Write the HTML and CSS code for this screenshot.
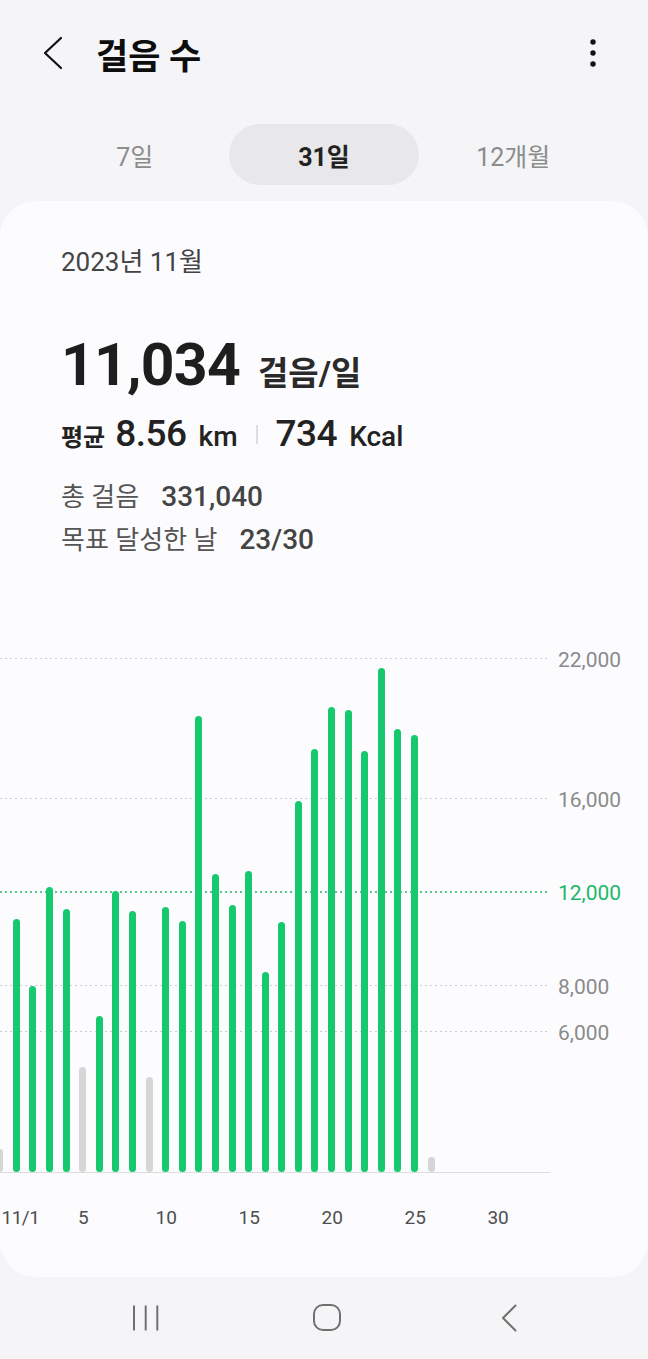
FILE: index.html
```html
<!DOCTYPE html>
<html lang="ko">

<head>
    <meta charset="UTF-8">
    <meta name="viewport" content="width=device-width, initial-scale=1.0">
    <title>걸음 수</title>
    <link rel="stylesheet" href="styles.css">
</head>

<body>
    <header class="app-bar">
        <span class="back-btn">
            <svg width="24" height="40" viewBox="0 0 24 40">
                <path d="M20 5 L4 20 L20 35" fill="none" stroke="#111" stroke-width="2.2" stroke-linecap="round" stroke-linejoin="round" />
            </svg>
        </span>
        <h1>걸음 수</h1>
        <span class="more-btn">
            <svg width="10" height="30" viewBox="0 0 10 30">
                <circle cx="5" cy="4" r="2.7" fill="#111" />
                <circle cx="5" cy="15" r="2.7" fill="#111" />
                <circle cx="5" cy="26" r="2.7" fill="#111" />
            </svg>
        </span>
    </header>

    <nav class="tabs">
        <span class="tab">7일</span>
        <span class="tab active">31일</span>
        <span class="tab">12개월</span>
    </nav>

    <main class="card">
        <div class="period">2023년 11월</div>

        <div class="daily">
            <span class="daily-value">11,034</span>
            <span class="daily-unit">걸음/일</span>
        </div>

        <div class="averages">
            <span class="avg-label">평균</span>
            <span class="avg-value">8.56</span>
            <span class="avg-unit">km</span>
            <span class="divider"></span>
            <span class="avg-value">734</span>
            <span class="avg-unit">Kcal</span>
        </div>

        <div class="totals">
            <div class="total-row"><span class="total-label">총 걸음</span><span class="total-value">331,040</span></div>
            <div class="total-row"><span class="total-label">목표 달성한 날</span><span class="total-value">23/30</span></div>
        </div>

        <div class="chart">
            <div class="plot">
                <div class="grid-line" style="bottom: 513px"></div>
                <div class="grid-line" style="bottom: 373px"></div>
                <div class="grid-line goal" style="bottom: 280px"></div>
                <div class="grid-line" style="bottom: 186.5px"></div>
                <div class="grid-line" style="bottom: 140px"></div>

                <div class="bars">
                    <div class="day"><span class="bar off" style="height: 23.5px"></span></div>
                    <div class="day"><span class="bar" style="height: 253.5px"></span></div>
                    <div class="day"><span class="bar" style="height: 186.5px"></span></div>
                    <div class="day"><span class="bar" style="height: 285px"></span></div>
                    <div class="day"><span class="bar" style="height: 263px"></span></div>
                    <div class="day"><span class="bar off" style="height: 105px"></span></div>
                    <div class="day"><span class="bar" style="height: 156.5px"></span></div>
                    <div class="day"><span class="bar" style="height: 281.5px"></span></div>
                    <div class="day"><span class="bar" style="height: 261px"></span></div>
                    <div class="day"><span class="bar off" style="height: 95.5px"></span></div>
                    <div class="day"><span class="bar" style="height: 265.5px"></span></div>
                    <div class="day"><span class="bar" style="height: 251.5px"></span></div>
                    <div class="day"><span class="bar" style="height: 456.5px"></span></div>
                    <div class="day"><span class="bar" style="height: 298.5px"></span></div>
                    <div class="day"><span class="bar" style="height: 267.5px"></span></div>
                    <div class="day"><span class="bar" style="height: 301.5px"></span></div>
                    <div class="day"><span class="bar" style="height: 200.5px"></span></div>
                    <div class="day"><span class="bar" style="height: 250px"></span></div>
                    <div class="day"><span class="bar" style="height: 371.5px"></span></div>
                    <div class="day"><span class="bar" style="height: 423.5px"></span></div>
                    <div class="day"><span class="bar" style="height: 465px"></span></div>
                    <div class="day"><span class="bar" style="height: 462.5px"></span></div>
                    <div class="day"><span class="bar" style="height: 421px"></span></div>
                    <div class="day"><span class="bar" style="height: 504px"></span></div>
                    <div class="day"><span class="bar" style="height: 443px"></span></div>
                    <div class="day"><span class="bar" style="height: 437.5px"></span></div>
                    <div class="day"><span class="bar off" style="height: 15.5px"></span></div>
                    <div class="day"></div>
                    <div class="day"></div>
                    <div class="day"></div>
                    <div class="day"></div>
                    <div class="day"></div>
                </div>
            </div>

            <div class="y-axis">
                <span class="y-label" style="bottom: 513px">22,000</span>
                <span class="y-label" style="bottom: 373px">16,000</span>
                <span class="y-label goal" style="bottom: 280px">12,000</span>
                <span class="y-label" style="bottom: 186.5px">8,000</span>
                <span class="y-label" style="bottom: 140px">6,000</span>
            </div>
        </div>

        <div class="x-axis">
            <div class="day"></div>
            <div class="day"><span class="edge">11/1</span></div>
            <div class="day"></div>
            <div class="day"></div>
            <div class="day"></div>
            <div class="day"><span>5</span></div>
            <div class="day"></div>
            <div class="day"></div>
            <div class="day"></div>
            <div class="day"></div>
            <div class="day"><span>10</span></div>
            <div class="day"></div>
            <div class="day"></div>
            <div class="day"></div>
            <div class="day"></div>
            <div class="day"><span>15</span></div>
            <div class="day"></div>
            <div class="day"></div>
            <div class="day"></div>
            <div class="day"></div>
            <div class="day"><span>20</span></div>
            <div class="day"></div>
            <div class="day"></div>
            <div class="day"></div>
            <div class="day"></div>
            <div class="day"><span>25</span></div>
            <div class="day"></div>
            <div class="day"></div>
            <div class="day"></div>
            <div class="day"></div>
            <div class="day"><span>30</span></div>
            <div class="day"></div>
        </div>
    </main>

    <footer class="nav-bar">
        <svg width="28" height="28" viewBox="0 0 28 28">
            <path d="M2 1.5 V26.5 M13.7 1.5 V26.5 M25.3 1.5 V26.5" stroke="#707070" stroke-width="2" />
        </svg>
        <svg width="30" height="30" viewBox="0 0 30 30">
            <rect x="2" y="2" width="26" height="25" rx="9" fill="none" stroke="#707070" stroke-width="2" />
        </svg>
        <svg width="20" height="30" viewBox="0 0 20 30">
            <path d="M16.5 2.5 L4 15 L16.5 27.5" fill="none" stroke="#707070" stroke-width="2" stroke-linecap="round" stroke-linejoin="round" />
        </svg>
    </footer>
</body>

</html>
```

FILE: styles.css
```css
* {
    margin: 0;
    padding: 0;
    box-sizing: border-box;
}

body {
    width: 648px;
    min-height: 1359px;
    background-color: #f5f5f7;
    font-family: Roboto, "Noto Sans CJK KR", sans-serif;
    color: #222;
    overflow-x: hidden;
}

/* top bar */
.app-bar {
    height: 106px;
    display: flex;
    align-items: center;
    padding: 0 50px 0 41px;
}

.back-btn,
.more-btn {
    display: flex;
}

.app-bar h1 {
    margin-left: 31px;
    font-size: 35px;
    font-weight: 700;
    color: #0d0d0d;
}

.more-btn {
    margin-left: auto;
}

/* period tabs */
.tabs {
    display: grid;
    grid-template-columns: repeat(3, 1fr);
    padding: 0 40px;
    margin-top: 18px;
}

.tab {
    height: 61px;
    display: flex;
    align-items: center;
    justify-content: center;
    font-size: 25px;
    color: #8c8c8c;
    border-radius: 31px;
}

.tab.active {
    background-color: #e8e8ea;
    color: #222;
    font-weight: 700;
}

/* main card */
.card {
    margin-top: 16px;
    height: 1076px;
    background-color: #fcfcfe;
    border-radius: 36px;
    padding-top: 45px;
    overflow: hidden;
}

.period,
.daily,
.averages,
.totals {
    padding-left: 61px;
}

.period {
    font-size: 26px;
    line-height: 32px;
    color: #444;
}

.daily {
    margin-top: 52px;
    display: flex;
    align-items: baseline;
    height: 70px;
}

.daily-value {
    font-size: 59px;
    font-weight: 700;
    line-height: 70px;
    color: #1e1e1e;
    letter-spacing: -0.8px;
}

.daily-unit {
    margin-left: 18px;
    font-size: 33px;
    font-weight: 700;
    color: #2a2a2a;
}

.averages {
    margin-top: 14px;
    height: 40px;
    display: flex;
    align-items: baseline;
    color: #222;
}

.avg-label {
    font-size: 24px;
    font-weight: 700;
    margin-right: 10px;
}

.avg-value {
    font-size: 37px;
    font-weight: 500;
    line-height: 40px;
    letter-spacing: -0.5px;
}

.avg-unit {
    font-size: 28px;
    font-weight: 500;
    margin-left: 12px;
}

.divider {
    align-self: center;
    width: 2px;
    height: 19px;
    margin: 0 18px;
    background-color: #dedede;
}

.totals {
    margin-top: 21px;
}

.total-row {
    display: flex;
    align-items: baseline;
    height: 43px;
    line-height: 43px;
}

.total-label {
    font-size: 26px;
    color: #555;
}

.total-value {
    margin-left: 22px;
    font-size: 28px;
    font-weight: 500;
    color: #444;
}

/* chart */
.chart {
    margin-top: 40px;
    display: flex;
    gap: 8px;
}

.plot {
    position: relative;
    width: 550px;
    height: 572px;
    border-bottom: 1px solid #dcdcdc;
}

.grid-line {
    position: absolute;
    left: 0;
    right: 2px;
    height: 1px;
    background-image: linear-gradient(to right, #cdcdcd 40%, transparent 40%);
    background-size: 5px 1px;
    background-repeat: repeat-x;
}

.grid-line.goal {
    height: 2px;
    margin-bottom: -0.5px;
    background-image: linear-gradient(to right, #5cc490 40%, transparent 40%);
    background-size: 5px 2px;
}

.bars {
    position: relative;
    height: 100%;
    display: flex;
    align-items: flex-end;
    margin-left: -8.6px;
}

.day {
    flex: 0 0 16.6px;
    min-width: 0;
    display: flex;
    justify-content: center;
}

.bar {
    width: 7px;
    border-radius: 3.5px;
    background-color: #16c96e;
}

.bar.off {
    background-color: #d6d6d6;
}

.y-axis {
    position: relative;
    width: 90px;
    height: 572px;
}

.y-label {
    position: absolute;
    left: 0;
    transform: translateY(50%);
    font-size: 21px;
    line-height: 24px;
    color: #8a8a8a;
}

.y-label.goal {
    color: #1eb76a;
}

.x-axis {
    display: flex;
    margin-left: -8px;
    margin-top: 33px;
    font-size: 19px;
    line-height: 24px;
    color: #4e4e4e;
}

.x-axis span {
    white-space: nowrap;
}

/* first label is pushed in so it stays inside the card */
.x-axis .edge {
    padding-left: 7px;
    letter-spacing: -0.5px;
}

/* system navigation */
.nav-bar {
    height: 82px;
    display: grid;
    grid-template-columns: repeat(3, 1fr);
    align-items: center;
    justify-items: center;
    padding: 0 48px 0 55px;
}
```
